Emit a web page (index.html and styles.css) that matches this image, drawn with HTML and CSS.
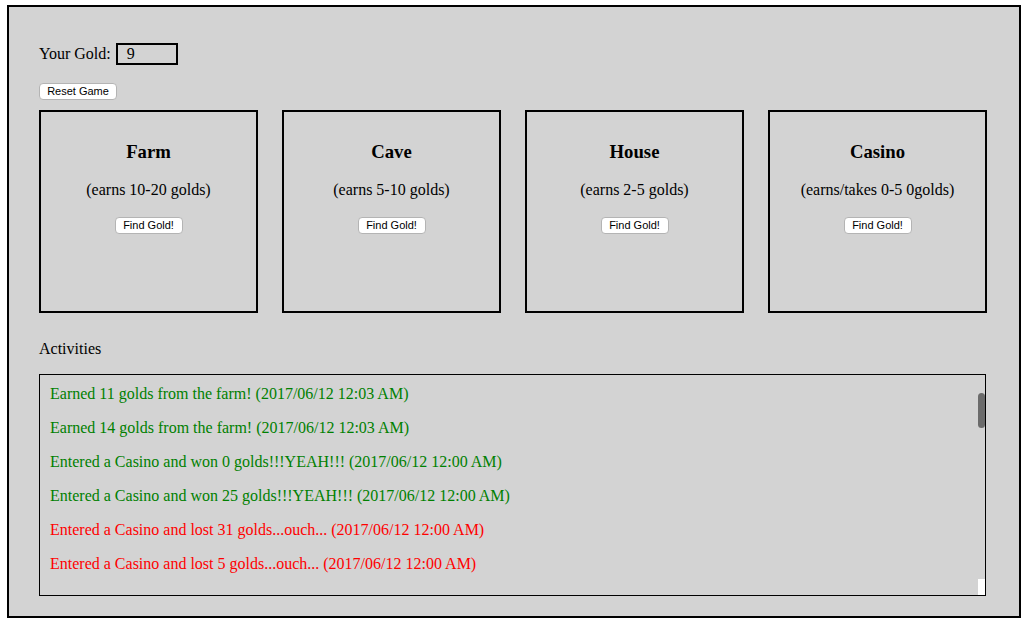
FILE: index.html
```html
<!DOCTYPE html>
<html>
<head>
<meta charset="utf-8">
<title>Ninja Gold</title>
<link rel="stylesheet" href="styles.css">
</head>
<body>
<div class="game">
  <div class="gold-row">Your Gold: <span class="gold-box">9</span></div>
  <button class="btn reset">Reset Game</button>
  <div class="places">
    <div class="place">
      <h3>Farm</h3>
      <p>(earns 10-20 golds)</p>
      <button class="btn">Find Gold!</button>
    </div>
    <div class="place">
      <h3>Cave</h3>
      <p>(earns 5-10 golds)</p>
      <button class="btn">Find Gold!</button>
    </div>
    <div class="place">
      <h3>House</h3>
      <p>(earns 2-5 golds)</p>
      <button class="btn">Find Gold!</button>
    </div>
    <div class="place">
      <h3>Casino</h3>
      <p>(earns/takes 0-5 0golds)</p>
      <button class="btn">Find Gold!</button>
    </div>
  </div>
  <div class="act-label">Activities</div>
  <div class="activities">
    <p class="win">Earned 11 golds from the farm! (2017/06/12 12:03 AM)</p>
    <p class="win">Earned 14 golds from the farm! (2017/06/12 12:03 AM)</p>
    <p class="win">Entered a Casino and won 0 golds!!!YEAH!!! (2017/06/12 12:00 AM)</p>
    <p class="win">Entered a Casino and won 25 golds!!!YEAH!!! (2017/06/12 12:00 AM)</p>
    <p class="lose">Entered a Casino and lost 31 golds...ouch... (2017/06/12 12:00 AM)</p>
    <p class="lose">Entered a Casino and lost 5 golds...ouch... (2017/06/12 12:00 AM)</p>
    <div class="thumb"></div>
    <div class="corner"></div>
  </div>
</div>
</body>
</html>
```
FILE: styles.css
```css
html, body {
  margin: 0;
  padding: 0;
  background: #ffffff;
}
body {
  padding: 5px 0 0 7px;
  font-family: "Liberation Serif", "Times New Roman", serif;
  font-size: 16px;
  color: #000;
}
.game {
  box-sizing: border-box;
  width: 1014px;
  height: 613px;
  border: 2px solid #000;
  background: #d3d3d3;
  padding: 36px 32px 0 30px;
}
.gold-row {
  height: 22px;
  line-height: 22px;
  display: flex;
  align-items: center;
}
.gold-box {
  box-sizing: border-box;
  display: inline-block;
  width: 62px;
  height: 22px;
  line-height: 18px;
  border: 2px solid #000;
  padding-left: 9px;
  margin-left: 5px;
}
.btn {
  box-sizing: border-box;
  font-family: "Liberation Sans", Arial, sans-serif;
  font-size: 11px;
  height: 17px;
  line-height: 15px;
  padding: 0 7px;
  background: #fff;
  border: 1px solid #b4b4b4;
  border-radius: 4px;
  color: #000;
}
.reset {
  display: block;
  margin-top: 18px;
  width: 78px;
}
.places {
  margin-top: 10px;
  display: grid;
  grid-template-columns: repeat(4, 219px);
  gap: 24px;
}
.place {
  box-sizing: border-box;
  height: 203px;
  border: 2px solid #000;
  padding: 10px;
  text-align: center;
}
.place h3 {
  font-size: 18.72px;
  margin: 18.72px 0;
  line-height: 22px;
}
.place p {
  margin: 16px 0;
  line-height: 18px;
}
.place .btn {
  margin-top: 0;
  width: 68px;
  padding: 0;
}
.act-label {
  margin-top: 27px;
  line-height: 18px;
}
.activities {
  position: relative;
  box-sizing: border-box;
  margin-top: 16px;
  width: 947px;
  height: 222px;
  border: 1px solid #000;
  padding: 10px 10px 0 10px;
  overflow: hidden;
}
.activities p {
  margin: 0 0 16px 0;
  line-height: 18px;
}
.win { color: #008000; }
.lose { color: #ff0000; }
.thumb {
  position: absolute;
  right: 0;
  top: 18px;
  width: 7px;
  height: 35px;
  border-radius: 4px;
  background: #6b6b6b;
}
.corner {
  position: absolute;
  right: 0;
  bottom: 0;
  width: 7px;
  height: 16px;
  background: #fff;
}
```
